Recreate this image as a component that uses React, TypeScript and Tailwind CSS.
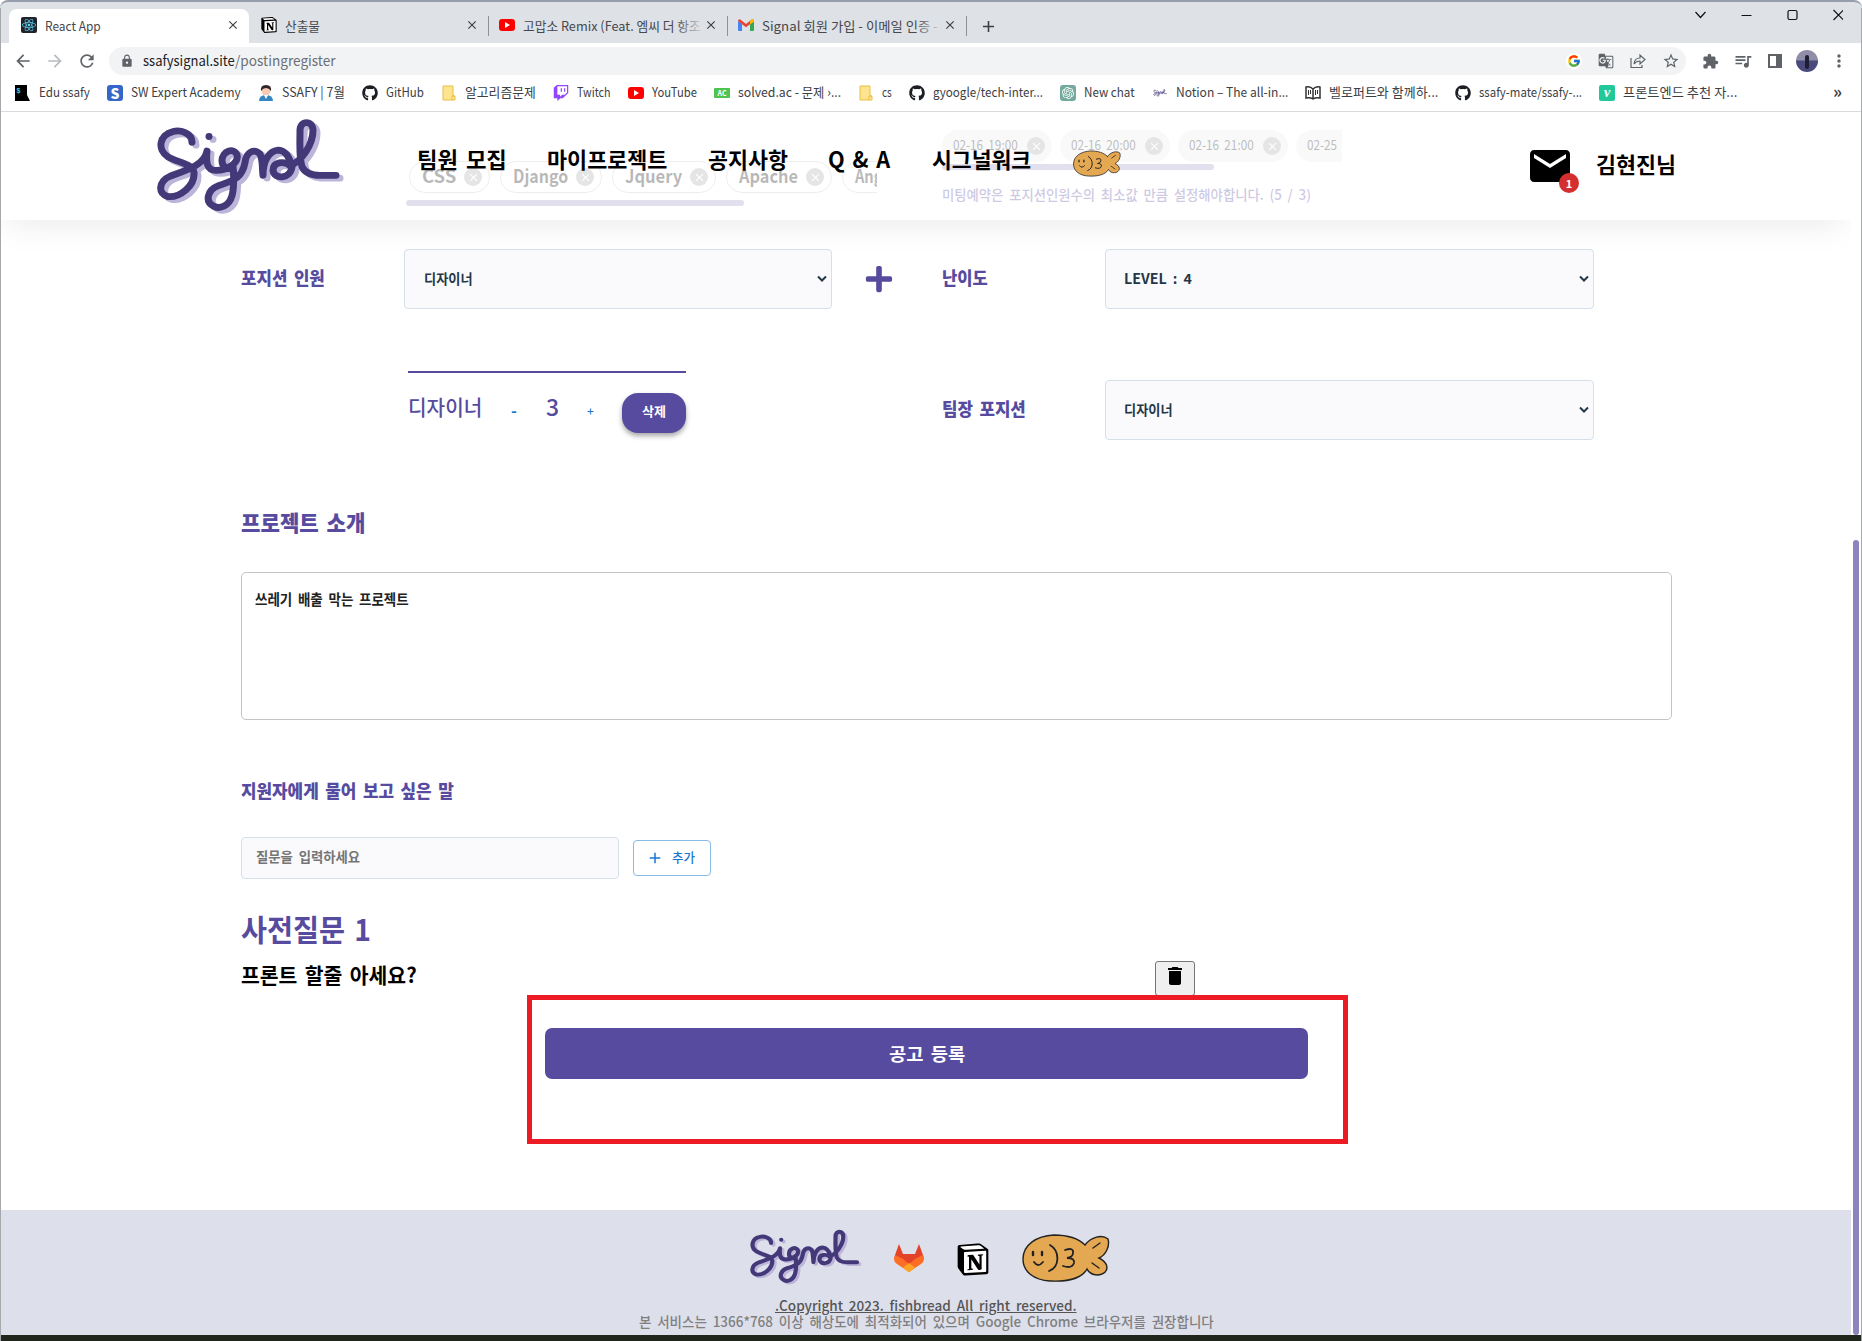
import React, { useLayoutEffect, useRef, useState } from "react";
import { FaGithub, FaReact, FaTwitch, FaPlus } from "react-icons/fa";
import { FcGoogle } from "react-icons/fc";
import { SiNotion, SiOpenai } from "react-icons/si";
import {
  MdAdd,
  MdArrowBack,
  MdArrowForward,
  MdClose,
  MdDelete,
  MdEmail,
  MdExtension,
  MdGTranslate,
  MdLock,
  MdMoreVert,
  MdQueueMusic,
  MdRefresh,
  MdStarBorder,
} from "react-icons/md";

/** One line of text squeezed or stretched horizontally to a given width. */
function Fit({
  w,
  className = "",
  inner = "-translate-y-[2px]",
  children,
}: {
  w: number;
  className?: string;
  inner?: string;
  children: React.ReactNode;
}) {
  const ref = useRef<HTMLSpanElement>(null);
  const [scale, setScale] = useState(1);
  useLayoutEffect(() => {
    const natural = ref.current?.offsetWidth ?? 0;
    if (natural > 0) setScale(w / natural);
  }, [w]);
  return (
    <span className={"inline-block shrink-0 whitespace-nowrap text-left " + className} style={{ width: w }}>
      <span ref={ref} className={"inline-block origin-left " + inner} style={{ transform: `scaleX(${scale})` }}>
        {children}
      </span>
    </span>
  );
}

const signalPath =
  "M62 37 C62 27 50 24 43 26 C29 29 27 45 38 52 C48 58 63 59 64 68 C65 82 50 94 38 93 C27 90 29 77 40 72 C52 67 74 62 77 46 C76 56 76 66 86 66 C98 66 109 58 107 50 C104 42 92 46 92 56 C92 64 100 66 103 62 C104 70 104 85 102 92 C99 103 90 106 84 103 C74 98 78 86 88 82 C104 76 112 74 115 58 C116 47 124 43 130 49 C133 55 132 62 133 71 C133 56 139 46 148 45 C156 45 160 54 162 62 C161 75 144 76 143 66 C143 57 154 56 160 61 C171 57 183 40 183 25 C183 14 170 14 170 25 C170 40 169 53 172 62 C175 69 182 71 190 71 L206 71";

function SignalLogo({ className }: { className: string }) {
  return (
    <svg
      viewBox="20 12 196 103"
      preserveAspectRatio="none"
      className={className}
      fill="none"
      strokeLinecap="round"
      strokeLinejoin="round"
    >
      <g stroke="#bdb4da" strokeWidth="7" transform="translate(4 3)">
        <path d={signalPath} />
        <path d="M79 31v.1" />
      </g>
      <g stroke="#433878" strokeWidth="7">
        <path d={signalPath} />
        <path d="M79 31v.1" />
      </g>
    </svg>
  );
}

function Fish({ className }: { className: string }) {
  return (
    <svg viewBox="0 0 88 48" className={className} fill="none" stroke="#222" strokeWidth="1.4" strokeLinecap="round">
      <path
        fill="#e4a853"
        d="M63 11 C56 4 46 1 32 1 C14 2 1 11 1 25 C1 38 12 46 28 47 C46 48 60 44 65 35 C68 41 75 42 80 40 C87 37 87 29 77 24 C84 21 88 12 86 5 C80 0 69 3 63 11Z"
      />
      <path strokeWidth="2.4" d="M11 18v3M20 18v3" />
      <path d="M12 28q4 6 9 0M28 11C38 17 38 33 27 37" strokeWidth="1.8" />
      <path d="M43 16q9-3 8 3q0 4-6 5q8 0 7 5q-2 6-11 3" strokeWidth="1.8" />
      <path d="M71 14l7-5M70 29l7 5" />
    </svg>
  );
}

function Gitlab({ className }: { className: string }) {
  return (
    <svg viewBox="0 0 30 28" className={className}>
      <path fill="#e24329" d="M5 0 9 10h12L25 0l4 11 1 4-15 13L0 15l1-4z" />
      <path fill="#fc6d26" d="M1 11 15 28 29 11l-8 4-6 5-6-5z" />
      <path fill="#fc6d26" d="M1 11 0 15q0 3 3 5l12 8 12-8q3-2 3-5l-1-4-14 10z" />
      <path fill="#fca326" d="m15 19 6 4.500-6 5-6-5z" />
      <path fill="#e24329" d="M8 10h14l-7 9z" />
    </svg>
  );
}

function Gmail() {
  return (
    <svg viewBox="0 0 16 12" className="h-[12px] w-4">
      <path fill="#4285f4" d="M0 2v9q0 1 1 1h3V5z" />
      <path fill="#34a853" d="M12 12h3q1 0 1-1V2l-4 3z" />
      <path fill="#ea4335" d="M0 2Q0 0 2 .3L8 5l6-4.700Q16 0 16 2l-4 3.300-4 3-4-3z" />
      <path fill="#fbbc04" d="M12 2v3.500L16 2.500V1.500Q15.500 0 14 .3z" />
    </svg>
  );
}

const Notion = ({ className }: { className: string }) => (
  <span className={"grid place-items-center text-black " + className}>
    <svg viewBox="0 0 24 24" className="col-start-1 row-start-1 h-full w-full">
      <path d="M2.500 2 17 1l5 4v16.500L6 22.500l-3.500-4z" fill="#fff" />
    </svg>
    <SiNotion className="col-start-1 row-start-1 h-full w-full" />
  </span>
);

const Youtube = () => (
  <span className="flex h-3 w-4 items-center justify-center rounded-[3px] bg-[#ff0000]">
    <span className="h-0 w-0 border-y-[3px] border-l-[5px] border-y-transparent border-l-white" />
  </span>
);

const Folder = () => (
  <svg viewBox="0 0 16 16" className="h-4 w-4">
    <path d="M2 1h10v10h2v4H2z" fill="#ffe48f" stroke="#e8bf47" />
    <path d="M11 15v-4h3" fill="none" stroke="#e8bf47" />
  </svg>
);

function Tab({ icon, w, text, active, fade }: { icon: React.ReactNode; w: number; text: string; active?: boolean; fade?: boolean }) {
  return (
    <div
      className={
        "relative flex h-[34px] items-center pb-[2px] pr-[9px] " +
        (active ? "w-[240px] rounded-t-lg bg-white pl-3" : fade ? "w-[238px] pl-[10px]" : "w-[239px] pl-3")
      }
    >
      <span className="flex w-4 justify-center">{icon}</span>
      <span className="relative ml-2 flex-1">
        <Fit w={w} className="text-[13px] text-[#45484c]" inner="-translate-y-px">{text}</Fit>
        {fade && <span className="absolute right-0 top-0 h-5 w-7 bg-gradient-to-r from-transparent to-[#dee1e6]" />}
      </span>
      <MdClose className="h-[14px] w-[14px] text-[#3c4043]" />
    </div>
  );
}

const TabLine = () => <span className="h-5 w-px shrink-0 bg-[#8d9196]" />;

const bookmarks: { icon: React.ReactNode; w: number; text: string }[] = [
  {
    icon: (
      <svg viewBox="0 0 16 16" className="h-4 w-4">
        <path d="M0 0h12v10l3 6H0z" fill="#000" />
        <text x="1.500" y="8" fontSize="7" fontFamily="Liberation Sans" fontWeight="700" fill="#49c6e5">$</text>
      </svg>
    ),
    w: 51,
    text: "Edu ssafy",
  },
  {
    icon: <span className="flex h-4 w-4 items-center justify-center rounded-[3px] bg-[#3567c8] text-[14px] font-black leading-none text-white">S</span>,
    w: 110,
    text: "SW Expert Academy",
  },
  {
    icon: (
      <svg viewBox="0 0 16 16" className="h-4 w-4">
        <path d="M1 16q0-6 7-6t7 6z" fill="#3587c4" />
        <circle cx="8" cy="6" r="4.500" fill="#f6cdb4" />
        <path d="M3 6Q2 0 8 0t5 6Q11 3 8 3T3 6z" fill="#30262a" />
        <path d="M6 10h4l-2 4z" fill="#fff" />
      </svg>
    ),
    w: 63,
    text: "SSAFY | 7월",
  },
  { icon: <FaGithub className="h-4 w-4 text-[#1b1f23]" />, w: 38, text: "GitHub" },
  { icon: <Folder />, w: 71, text: "알고리즘문제" },
  { icon: <FaTwitch className="h-4 w-4 text-[#9146ff]" />, w: 34, text: "Twitch" },
  { icon: <Youtube />, w: 45, text: "YouTube" },
  {
    icon: <span className="flex h-[10px] w-4 items-center justify-center rounded-[1px] bg-[#4fc34f] text-[7px] font-bold leading-none text-white">AC</span>,
    w: 103,
    text: "solved.ac - 문제 ›...",
  },
  { icon: <Folder />, w: 10, text: "cs" },
  { icon: <FaGithub className="h-4 w-4 text-[#1b1f23]" />, w: 110, text: "gyoogle/tech-inter..." },
  {
    icon: <span className="flex h-4 w-4 items-center justify-center rounded-[3px] bg-[#74aa9c] text-white"><SiOpenai className="h-3 w-3" /></span>,
    w: 51,
    text: "New chat",
  },
  { icon: <SignalLogo className="h-2 w-[14px]" />, w: 112, text: "Notion – The all-in..." },
  {
    icon: (
      <svg viewBox="0 0 16 14" className="h-[14px] w-4" fill="none" stroke="#333" strokeWidth="1.500">
        <path d="M8 3Q5 0 1 1v11q4-1 7 1 3-2 7-1V1Q11 0 8 3v10" />
        <path d="M3.500 4v5M5.500 4v4M10.500 4v5M12.500 4v4" strokeWidth="1" />
      </svg>
    ),
    w: 109,
    text: "벨로퍼트와 함께하...",
  },
  { icon: <FaGithub className="h-4 w-4 text-[#1b1f23]" />, w: 103, text: "ssafy-mate/ssafy-..." },
  {
    icon: <span className="flex h-4 w-4 items-center justify-center rounded-[2px] bg-[#20c997] font-['Liberation_Serif'] text-[14px] font-bold italic leading-none text-white">v</span>,
    w: 114,
    text: "프론트엔드 추천 자...",
  },
];

function BrowserChrome() {
  return (
    <div className="h-[112px] border-b border-[#d9dbde] bg-white text-[#3c4043]">
      <div className="flex h-[43px] items-end rounded-t-lg border-t-2 border-[#969dab] bg-[#dee1e6] pl-[9px]">
        <div className="flex items-center">
          <Tab active w={56} text="React App" icon={<span className="flex h-4 w-4 items-center justify-center rounded-[2px] bg-[#20232a]"><FaReact className="h-[14px] w-[14px] text-[#61dafb]" /></span>} />
          <Tab w={35} text="산출물" icon={<Notion className="h-4 w-4" />} />
          <TabLine />
          <Tab fade w={178} text="고맙소 Remix (Feat. 엠씨 더 항조" icon={<Youtube />} />
          <TabLine />
          <Tab fade w={176} text="Signal 회원 가입 - 이메일 인증 -" icon={<Gmail />} />
          <TabLine />
          <MdAdd className="ml-[12px] h-[19px] w-[19px]" />
        </div>
        <svg viewBox="0 0 160 14" className="mb-[21px] ml-auto mr-[19px] h-[14px] w-[160px]" fill="none" stroke="#111" strokeWidth="1.200">
          <path d="m12.500 4 5 5.500 5-5.500M58.500 7.500h10" />
          <rect x="105" y="2.500" width="9" height="9" rx="1.500" />
          <path d="m150.500 2 10 10m0-10-10 10" />
        </svg>
      </div>
      <div className="flex h-[36px] items-center pl-[13px] text-[#5f6368]">
        <MdArrowBack className="h-5 w-5" />
        <MdArrowForward className="ml-3 h-5 w-5 text-[#b9bcbf]" />
        <MdRefresh className="ml-3 h-5 w-5" />
        <div className="ml-3 flex h-7 w-[1577px] items-center rounded-full bg-[#f1f3f4] pl-[11px] pr-[6px]">
          <MdLock className="h-[14px] w-[14px]" />
          <Fit w={92} className="ml-[9px] text-[14px] text-[#202124]" inner="-translate-y-px">ssafysignal.site</Fit>
          <Fit w={101} className="text-[14px] text-[#6c7075]" inner="-translate-y-px">/postingregister</Fit>
          <div className="ml-auto flex items-center gap-4">
            <span className="flex h-4 w-4 items-center justify-center rounded-full bg-white"><FcGoogle className="h-[14px] w-[14px]" /></span>
            <MdGTranslate className="h-4 w-4" />
            <svg viewBox="0 0 16 16" className="h-4 w-4" fill="none" stroke="currentColor" strokeWidth="1.200">
              <path d="M1 5v9.500h11V12" />
              <path d="M4 11q.5-6 6-6V2l5 4.500-5 4.500V8q-4 0-6 3z" />
            </svg>
            <MdStarBorder className="h-[18px] w-[18px]" />
          </div>
        </div>
        <MdExtension className="ml-[16px] h-[17px] w-[17px]" />
        <MdQueueMusic className="ml-[14px] h-5 w-5" />
        <span className="ml-[15px] h-[14px] w-[14px] border-2 border-r-[6px] border-[#5f6368]" />
        <span className="ml-[14px] flex h-[22px] w-[22px] justify-center overflow-hidden rounded-full bg-gradient-to-b from-[#8f8da8] from-45% to-[#4a4a7c] to-50%">
          <span className="mt-[5px] h-[14px] w-1 rounded-full bg-[#1f1d33]" />
        </span>
        <MdMoreVert className="ml-[11px] h-5 w-5" />
      </div>
      <div className="flex h-[28px] items-center gap-[17px] pl-[15px]">
        {bookmarks.map((b) => (
          <span key={b.text} className="flex items-center gap-2">
            <span className="flex w-4 justify-center">{b.icon}</span>
            <Fit w={b.w} className="text-[13px]" inner="-translate-y-px">{b.text}</Fit>
          </span>
        ))}
        <span className="ml-auto mr-[20px] -translate-y-[3px] text-[17px] font-bold leading-none">»</span>
      </div>
    </div>
  );
}

const Cross = () => (
  <span className="flex h-[18px] w-[18px] shrink-0 items-center justify-center rounded-full bg-[#a8a8a8] text-white">
    <MdClose className="h-[13px] w-[13px]" />
  </span>
);

const skills = [
  { text: "CSS", w: 34, size: "w-[81px]" },
  { text: "Django", w: 55, size: "w-[102px]" },
  { text: "Jquery", w: 57, size: "w-[104px]" },
  { text: "Apache", w: 59, size: "w-[106px]" },
  { text: "Angular", w: 56, size: "w-[110px]" },
];
const dates = ["02-16 19:00", "02-16 20:00", "02-16 21:00", "02-25 19:00"];

function Header() {
  return (
    <header className="absolute inset-x-0 top-0 flex h-[108px] bg-white/70 shadow-[0_14px_32px_-8px_rgba(0,0,0,0.08)]">
      <SignalLogo className="ml-[150px] mt-[6px] h-[100px] w-[196px] shrink-0" />
      <nav className="ml-[71px] mt-[32px] flex h-8 items-center text-[22px] font-bold leading-8 text-black">
        <Fit w={90}>팀원 모집</Fit>
        <Fit w={120} className="ml-[40px]">마이프로젝트</Fit>
        <Fit w={80} className="ml-[41px]">공지사항</Fit>
        <Fit w={62} className="ml-[40px]">Q &amp; A</Fit>
        <Fit w={99} className="ml-[42px]">시그널워크</Fit>
        <Fish className="ml-[42px] mt-[6px] h-[27px] w-[48px]" />
      </nav>
      <div className="relative ml-[405px] mt-[30px] h-[48px] w-[48px]">
        <MdEmail className="h-[48px] w-[48px] text-black" />
        <span className="absolute left-[33px] top-[31px] flex h-5 w-5 items-center justify-center rounded-full bg-[#d32f2f] text-[11px] font-bold text-white">1</span>
      </div>
      <Fit w={80} className="ml-[22px] mt-[36px] text-[22px] font-bold leading-8 text-black" inner="-translate-y-px">김현진님</Fit>
    </header>
  );
}

function Select({ w, text, tw, pl }: { w: string; text: string; tw: number; pl: string }) {
  return (
    <div className={"flex h-[60px] items-center justify-between rounded-[4px] border border-[#d5e0e9] bg-[#fafafd] pr-1 text-[#253746] " + w + " " + pl}>
      <Fit w={tw} className="text-[14px] font-bold" inner="-translate-y-px">{text}</Fit>
      <svg viewBox="0 0 10 8" className="h-2 w-[10px]" fill="none" stroke="currentColor" strokeWidth="2">
        <path d="m1 1.500 4 4 4-4" />
      </svg>
    </div>
  );
}

function Form() {
  return (
    <div className="text-[#574b9f]">
      <div className="flex h-[137px]">
        <div className="w-[636px] pl-[165px] pt-[49px]">
          <div className="flex gap-[10px] overflow-hidden pl-[3px]">
            {skills.map((s) => (
              <span key={s.text} className={"flex h-8 shrink-0 items-center justify-between rounded-full border border-[#c4c4c4] pl-[12px] pr-[7px] text-[#111] " + s.size}>
                <Fit w={s.w} className="text-[18px] font-bold">{s.text}</Fit>
                <Cross />
              </span>
            ))}
          </div>
          <div className="mt-[7px] h-[6px] w-[338px] rounded-full bg-[#9e97c6]" />
        </div>
        <div className="ml-[65px] w-[400px] pt-[18px]">
          <div className="flex gap-[8px] overflow-hidden">
            {dates.map((d) => (
              <span key={d} className="flex h-8 w-[110px] shrink-0 items-center justify-between rounded-full bg-[#ebebeb] pl-[11px] pr-[7px] text-[#222]">
                <Fit w={65} className="text-[13px]" inner="-translate-y-px">{d}</Fit>
                <Cross />
              </span>
            ))}
          </div>
          <div className="mt-[2px] h-[6px] w-[272px] rounded-full bg-[#9e97c6]" />
          <Fit w={369} className="mt-[14px] text-[14px] font-medium leading-6">미팅예약은 포지션인원수의 최소값 만큼 설정해야합니다. (5 / 3)</Fit>
        </div>
      </div>

      <div className="flex h-[60px] items-center">
        <Fit w={84} className="text-[18px] font-black">포지션 인원</Fit>
        <div className="ml-[79px]"><Select w="w-[428px]" pl="pl-[19px]" text="디자이너" tw={49} /></div>
        <FaPlus className="ml-[32px] h-[30px] w-[30px]" />
        <Fit w={46} className="ml-[48px] text-[18px] font-black">난이도</Fit>
        <div className="ml-[117px]"><Select w="w-[489px]" pl="pl-[18px]" text="LEVEL : 4" tw={68} /></div>
      </div>

      <div className="flex h-[192px]">
        <div className="ml-[167px] mt-[62px] h-fit w-[278px] border-t-2 border-[#574b9f]">
          <div className="flex items-start pt-[20px]">
            <Fit w={74} className="text-[21px] font-medium leading-8" inner="-translate-y-[3px]">디자이너</Fit>
            <span className="ml-[29px] mt-px text-[16px] font-bold leading-8 text-[#1976d2]">-</span>
            <Fit w={13} className="ml-[29px] text-[23px] font-medium leading-8" inner="-translate-y-[3px]">3</Fit>
            <span className="ml-[28px] mt-[2px] text-[12px] font-medium leading-8 text-[#1976d2]">+</span>
            <span className="ml-auto flex h-10 w-16 items-center justify-center rounded-[16px] bg-[#574b9f] text-white shadow-[0_3px_5px_rgba(0,0,0,0.35)]">
              <Fit w={24} className="text-[13px] font-bold">삭제</Fit>
            </span>
          </div>
        </div>
        <div className="ml-[256px] mt-[71px] flex h-[60px] items-center">
          <Fit w={84} className="text-[18px] font-black">팀장 포지션</Fit>
          <div className="ml-[79px]"><Select w="w-[489px]" pl="pl-[18px]" text="디자이너" tw={49} /></div>
        </div>
      </div>

      <div className="flex h-[38px] items-end">
        <Fit w={124} className="text-[22px] font-black leading-8">프로젝트 소개</Fit>
      </div>
      <div className="mt-[33px] h-[148px] w-[1431px] rounded-[5px] border border-[#c4c4c4] bg-white pl-[13px] pt-[14px] text-[#222]">
        <Fit w={154} className="text-[15px] font-bold leading-6" inner="-translate-y-px">쓰레기 배출 막는 프로젝트</Fit>
      </div>

      <div className="mt-[55px] flex h-8">
        <Fit w={213} className="text-[18px] font-black leading-8" inner="-translate-y-px">지원자에게 물어 보고 싶은 말</Fit>
      </div>
      <div className="mt-[30px] flex items-center">
        <div className="flex h-[42px] w-[378px] items-center rounded-[4px] border border-[#d5e0e9] bg-[#fafafd] pl-[14px] text-[#757575]">
          <Fit w={104} className="text-[14px] font-bold">질문을 입력하세요</Fit>
        </div>
        <div className="ml-[14px] flex h-9 w-[78px] items-center rounded-[4px] border border-[#8cbae8] pl-[12px] text-[#1976d2]">
          <MdAdd className="h-[18px] w-[18px]" />
          <Fit w={23} className="ml-[8px] text-[13px] font-medium" inner="-translate-y-px">추가</Fit>
        </div>
      </div>

      <div className="mt-[30px] flex h-10 items-center">
        <Fit w={130} className="text-[30px] font-bold leading-10" inner="-translate-y-px">사전질문 1</Fit>
      </div>
      <div className="mt-[11px] flex h-[35px] items-start text-black">
        <Fit w={176} className="text-[21px] font-bold leading-8">프론트 할줄 아세요?</Fit>
        <span className="ml-[738px] mt-px flex h-[35px] w-10 justify-center rounded-[3px] border border-[#767676] bg-[#efefef] pt-[2px]">
          <MdDelete className="h-6 w-6" />
        </span>
      </div>
      <div className="relative ml-[286px] h-[149px] w-[821px] border-[5px] border-[#ed1c24] pl-[13px] pt-[28px]">
        <div className="flex h-[51px] w-[763px] items-center justify-center rounded-[7px] bg-[#574b9f] text-white">
          <Fit w={76} className="text-[18px] font-bold" inner="translate-y-0">공고 등록</Fit>
        </div>
      </div>
    </div>
  );
}

function Footer() {
  return (
    <footer className="h-[125px] bg-[#dddfeb]">
      <div className="flex h-[88px] items-center pl-[746px] pt-[8px]">
        <SignalLogo className="h-[58px] w-[117px]" />
        <Gitlab className="ml-[31px] h-7 w-[30px]" />
        <Notion className="ml-[33px] mt-[2px] h-[33px] w-[32px]" />
        <Fish className="ml-[33px] h-[48px] w-[88px]" />
      </div>
      <div className="flex flex-col items-start leading-4">
        <Fit w={302} className="ml-[775px] text-[14px] font-medium text-[#555]" inner="-translate-y-px underline underline-offset-1">.Copyright 2023. fishbread All right reserved.</Fit>
        <Fit w={575} className="ml-[639px] text-[14px] font-medium text-[#808080]" inner="-translate-y-px">본 서비스는 1366*768 이상 해상도에 최적화되어 있으며 Google Chrome 브라우저를 권장합니다</Fit>
      </div>
    </footer>
  );
}

export default function App() {
  return (
    <div className="relative h-[1341px] w-[1862px] overflow-hidden bg-[#a9b3c4] font-['Noto_Sans_CJK_KR',sans-serif]">
      <BrowserChrome />
      <div className="flex h-[1223px] bg-white [word-spacing:0.18em]">
        <div className="relative flex w-[1851px] flex-col overflow-hidden">
          <div className="flex-1 pl-[241px]">
            <Form />
          </div>
          <Footer />
          <Header />
        </div>
        <div className="w-[11px] pl-[2px] pt-[428px]">
          <div className="h-[795px] w-[6px] rounded-full bg-[#8d84bd]" />
        </div>
      </div>
      <div className="h-[6px] bg-[#20261b]" />
      <div className="absolute bottom-0 left-0 top-[8px] w-px bg-[#a6a8ab]" />
      <div className="absolute bottom-0 right-0 top-[8px] w-px bg-[#a6a8ab]" />
    </div>
  );
}
